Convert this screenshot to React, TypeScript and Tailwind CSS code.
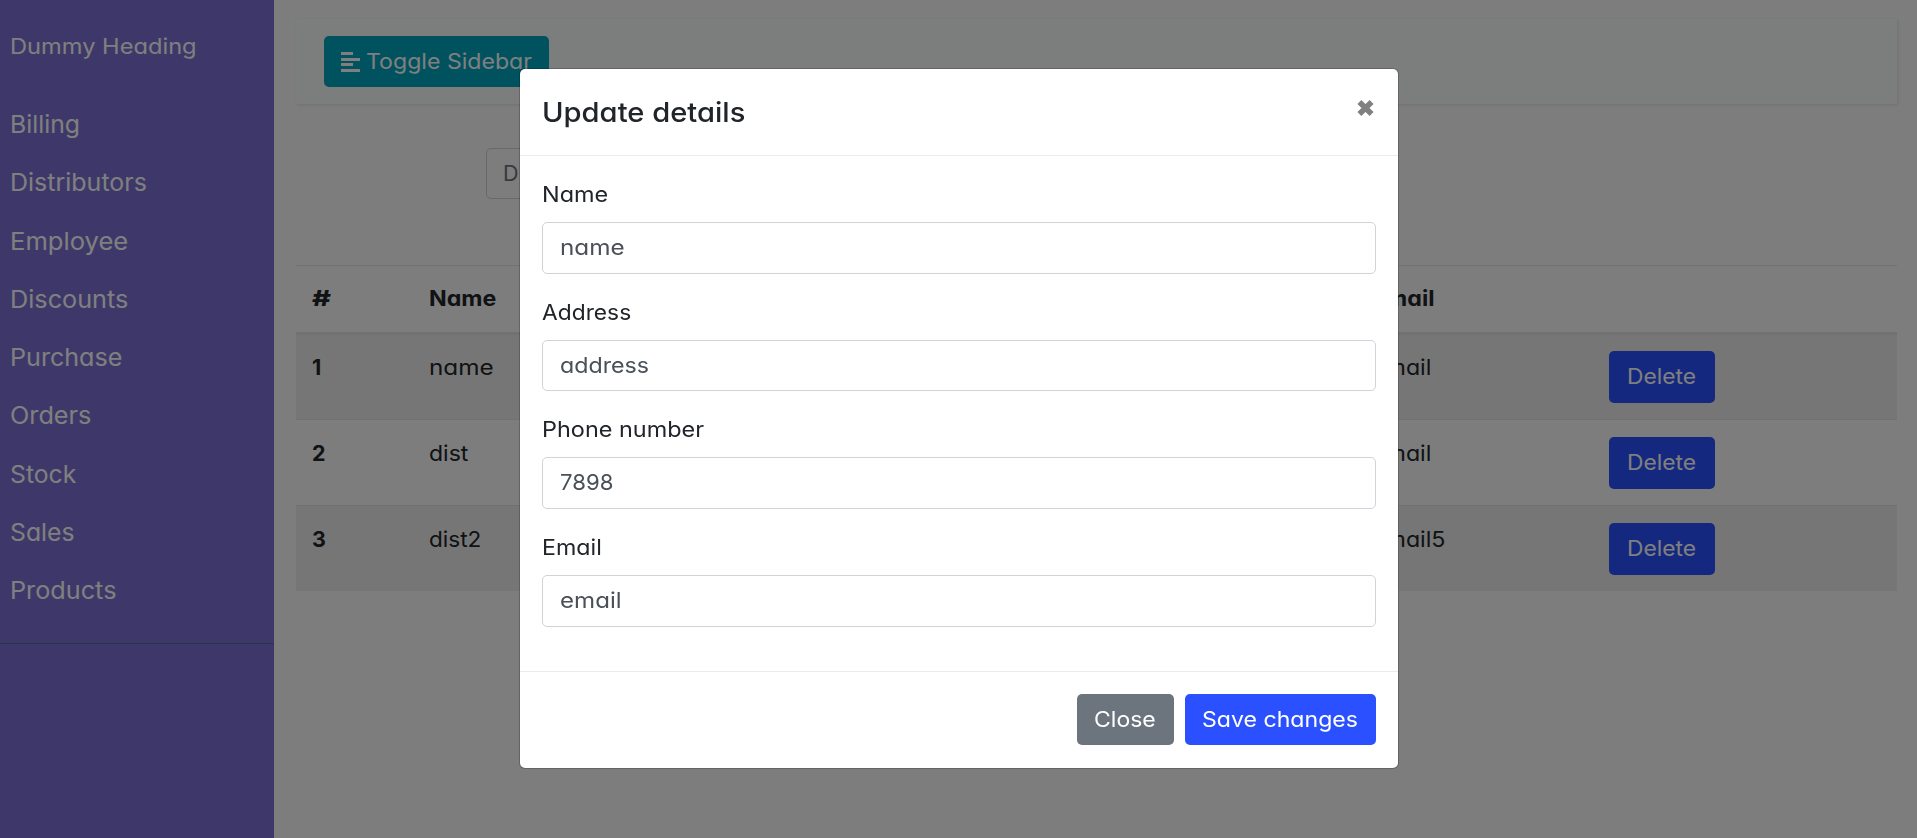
import React from "react";

const links = [
  { label: "Billing", stretch: "scale-x-[1.01]" },
  { label: "Distributors", stretch: "scale-x-[1.02]" },
  { label: "Employee", stretch: "scale-x-[1.045]" },
  { label: "Discounts", stretch: "scale-x-[1.03]" },
  { label: "Purchase", stretch: "scale-x-[1.025]" },
  { label: "Orders", stretch: "scale-x-[1.03]" },
  { label: "Stock", stretch: "scale-x-[1.01]" },
  { label: "Sales", stretch: "scale-x-[1.01]" },
  { label: "Products", stretch: "scale-x-[1.03]" },
];

const headings = ["Name", "Address", "Phone number", "Email", ""];

const rows = [
  { id: 1, name: "name", stretch: "scale-x-[1.13]", address: "address", phone: "7898", email: "email" },
  { id: 2, name: "dist", stretch: "scale-x-[1.07]", address: "address", phone: "7898", email: "email" },
  { id: 3, name: "dist2", stretch: "scale-x-[1.05]", address: "address", phone: "7898", email: "email5" },
];

const fields = [
  { label: "Name", labelStretch: "scale-x-[1.09]", value: "name", valueStretch: "scale-x-[1.13]" },
  { label: "Address", labelStretch: "scale-x-[1.06]", value: "address", valueStretch: "scale-x-[1.08]" },
  { label: "Phone number", labelStretch: "scale-x-[1.09]", value: "7898", valueStretch: "scale-x-[1.03]" },
  { label: "Email", labelStretch: "scale-x-[1.08]", value: "email", valueStretch: "scale-x-[1.12]" },
];

function Wide({ stretch, children }: { stretch: string; children: React.ReactNode }) {
  return <span className={`inline-block origin-left whitespace-nowrap ${stretch}`}>{children}</span>;
}

function Sidebar() {
  return (
    <aside className="w-[274px] shrink-0 bg-[#7b70d3] text-white">
      <h3 className="h-[95px] pl-[10px] leading-[93px]">
        <Wide stretch="scale-x-[1.1]">Dummy Heading</Wide>
      </h3>
      <ul className="h-[549px] border-b border-[#47748b] text-[24.5px]">
        {links.map((l) => (
          <li key={l.label} className="h-[58.25px] pl-[10px] leading-[58px]">
            <Wide stretch={l.stretch}>{l.label}</Wide>
          </li>
        ))}
      </ul>
    </aside>
  );
}

function ToggleBar() {
  return (
    <nav className="flex h-[85px] items-start bg-[#f9fcfa] pt-[17px] pl-[28px] shadow-[1px_1px_3px_rgba(0,0,0,0.1)]">
      <button className="flex h-[51px] w-[225px] items-center rounded-[5px] bg-[#00a4bc] pl-[17px] text-white">
        <svg className="h-[20px] w-[19px]" viewBox="0 0 19 20" fill="currentColor">
          <path d="M0 0h12v3H0zM0 6h19v3H0zM0 11h12v3H0zM0 17h19v3H0z" />
        </svg>
        <span className="ml-[6px]">
          <Wide stretch="scale-x-[1.075]">Toggle Sidebar</Wide>
        </span>
      </button>
    </nav>
  );
}

function DataTable() {
  return (
    <table className="mt-[66px] w-full table-fixed border-collapse text-left text-[#212529]">
      <colgroup>
        <col className="w-[116px]" />
        <col className="w-[280px]" />
        <col className="w-[330px]" />
        <col className="w-[333px]" />
        <col className="w-[237px]" />
        <col />
      </colgroup>
      <thead>
        <tr className="h-[70px] align-top font-bold shadow-[inset_0_1px_0_#dee2e6,inset_0_-3px_0_#dee2e6]">
          <th className="p-0 pl-[16px] leading-[67px] font-extrabold">
            <Wide stretch="scale-x-[1.35]">#</Wide>
          </th>
          {headings.map((h) => (
            <th key={h} className="p-0 pl-[17px] leading-[67px]">
              <Wide stretch="scale-x-[1.08]">{h}</Wide>
            </th>
          ))}
        </tr>
      </thead>
      <tbody>
        {rows.map((r, i) => {
          const top = i === 0 ? "pt-[16px]" : "pt-[18px]";
          return (
            <tr
              key={r.id}
              className={
                i === 0
                  ? "h-[84px] bg-[#ededed] align-top leading-[33px]"
                  : i === 1
                    ? "h-[86px] align-top leading-[33px] shadow-[inset_0_1px_0_#dee2e6]"
                    : "h-[86px] bg-[#ededed] align-top leading-[33px] shadow-[inset_0_1px_0_#dee2e6]"
              }
            >
              <th className={`pl-[16px] font-bold ${top}`}>{r.id}</th>
              <td className={`pl-[17px] ${top}`}>
                <Wide stretch={r.stretch}>{r.name}</Wide>
              </td>
              {[r.address, r.phone, r.email].map((c, k) => (
                <td key={k} className={`pl-[17px] ${top}`}>
                  <Wide stretch="scale-x-[1.08]">{c}</Wide>
                </td>
              ))}
              <td className={`pl-[17px] ${top}`}>
                <button className="block h-[51.5px] w-[106px] rounded-[5px] bg-[#2a50ff] pl-[18px] text-left text-white">
                  <Wide stretch="scale-x-[1.06]">Delete</Wide>
                </button>
              </td>
            </tr>
          );
        })}
      </tbody>
    </table>
  );
}

function UpdateDialog() {
  return (
    <div className="fixed inset-0 flex items-start bg-black/50 pt-[68px] pl-[519px]">
      <section className="h-[701px] w-[880px] rounded-[6px] border border-black/20 bg-white bg-clip-padding text-[#212529]">
        <header className="flex h-[87px] items-start justify-between border-b border-[#e9ecef] pr-[24px] pl-[22px]">
          <h5 className="text-[27.5px] leading-[86px] font-medium">
            <Wide stretch="scale-x-[1.06]">Update details</Wide>
          </h5>
          <svg className="mt-[31px] h-[16px] w-[17px]" viewBox="0 0 17 16" fill="none" stroke="#808080" strokeWidth="5.6">
            <path d="M2.4 2 14.6 14M14.6 2 2.4 14" />
          </svg>
        </header>
        <div className="h-[515px] px-[22px] pt-[22px]">
          {fields.map((f) => (
            <div key={f.label} className="h-[117.7px]">
              <label className="block h-[44px] leading-[33px]">
                <Wide stretch={f.labelStretch}>{f.label}</Wide>
              </label>
              <div className="h-[51.5px] rounded-[5px] border border-[#ced4da] pl-[17px] leading-[49px] text-[#495057]">
                <Wide stretch={f.valueStretch}>{f.value}</Wide>
              </div>
            </div>
          ))}
        </div>
        <footer className="flex justify-end gap-[11px] border-t border-[#e9ecef] pt-[22px] pr-[22px] text-white">
          <button className="h-[51px] w-[97px] rounded-[5px] bg-[#6c757d] pl-[17px] text-left">
            <Wide stretch="scale-x-[1.07]">Close</Wide>
          </button>
          <button className="h-[51px] w-[191px] rounded-[5px] bg-[#2a50ff] pl-[17px] text-left">
            <Wide stretch="scale-x-[1.075]">Save changes</Wide>
          </button>
        </footer>
      </section>
    </div>
  );
}

export default function App() {
  return (
    <div className="flex h-[838px] overflow-hidden bg-[#fafafa] font-['Inter',sans-serif] text-[21.5px] [font-feature-settings:'cv11']">
      <Sidebar />
      <main className="min-w-0 flex-1 pt-[19px] pr-[20px] pl-[22px]">
        <ToggleBar />
        <div className="mt-[44px] ml-[190px] h-[51px] w-[700px] rounded-[5px] border border-[#ced4da] pl-[16px] leading-[49px] text-[#6c757d]">
          D
        </div>
        <DataTable />
      </main>
      <UpdateDialog />
    </div>
  );
}
